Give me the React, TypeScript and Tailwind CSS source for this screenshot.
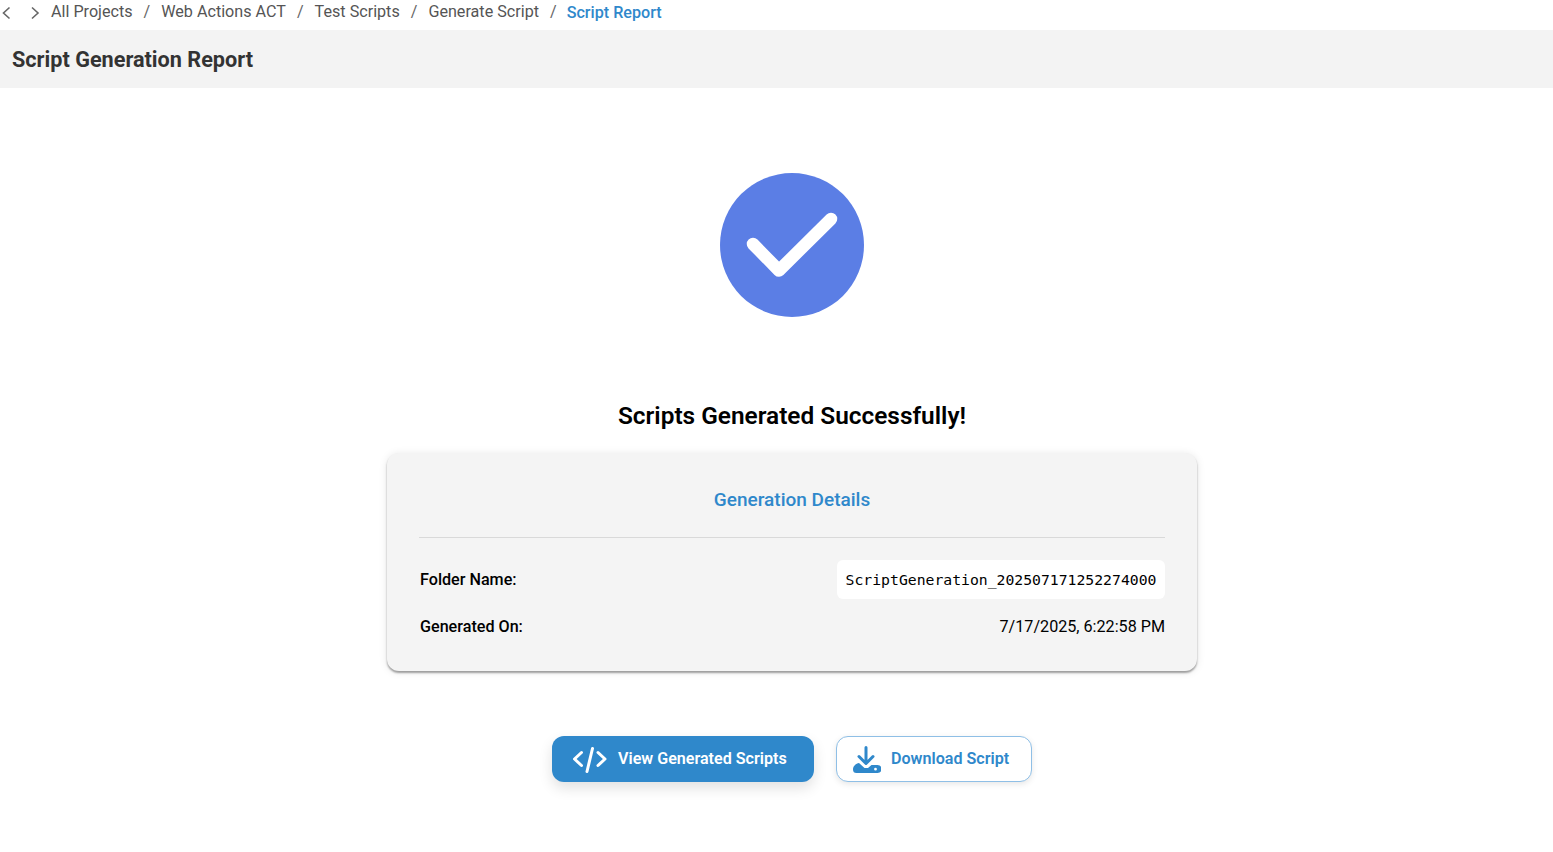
import React from "react";

const Sep = () => <span className="mx-[11px] text-[#666]">/</span>;

export default function App() {
  return (
    <div className="min-h-[852px] bg-white font-['Roboto',sans-serif] text-black overflow-hidden">
      <nav className="h-[30px] flex items-center text-[16.15px] text-[#555] leading-[24px] pb-[6px]">
        <svg width="10" height="14" viewBox="0 0 10 14" className="ml-[2px] mt-[1px]" fill="none" stroke="#666" strokeWidth="1.6">
          <path d="M7.500 1.500 1.500 7l6 5.500" />
        </svg>
        <svg width="10" height="14" viewBox="0 0 10 14" className="ml-[18px] mt-[1px]" fill="none" stroke="#666" strokeWidth="1.6">
          <path d="M2 1.500 8 7l-6 5.500" />
        </svg>
        <span className="ml-[11px]">All Projects</span>
        <Sep />
        <span>Web Actions ACT</span>
        <Sep />
        <span>Test Scripts</span>
        <Sep />
        <span>Generate Script</span>
        <Sep />
        <span className="font-medium text-[#2f88cb] mt-[2px] -ml-[1px]">Script Report</span>
      </nav>
      <header className="h-[58px] bg-[#f3f3f3] flex items-center pl-[12px]">
        <h1 className="text-[21.65px] font-bold text-[#333] leading-none mt-[2px]">Script Generation Report</h1>
      </header>
      <main className="pl-[31px] flex flex-col items-center">
        <div className="mt-[85px] w-[144px] h-[144px] rounded-full bg-[#5b7ee5] flex items-center justify-center">
          <svg width="144" height="144" viewBox="0 0 144 144" fill="none" stroke="white" strokeWidth="12.500" strokeLinecap="round" strokeLinejoin="round">
            <path d="M33 71 59 97.500 111 46" />
          </svg>
        </div>
        <h2 className="mt-[83px] text-[24.4px] leading-[32px] font-semibold text-black">Scripts Generated Successfully!</h2>
        <section className="mt-[21px] w-[810px] h-[218px] rounded-[12px] bg-[#f4f4f4] px-[32px] pt-[32px] shadow-[0_2px_2px_rgba(0,0,0,0.35),0_1px_8px_rgba(0,0,0,0.1)]">
          <h3 className="text-center text-[19px] leading-[30px] font-medium text-[#2f88cb] pb-[22px] border-b border-[#d9d9d9]">Generation Details</h3>
          <div className="mt-[22px] h-[39px] flex items-center justify-between text-[16.15px] pl-[1px]">
            <span className="font-medium pt-[2px]">Folder Name:</span>
            <span className="bg-white rounded-[6px] h-[39px] w-[328px] pt-[2px] flex items-center justify-center font-['DejaVu_Sans_Mono',monospace] text-[14.75px]">ScriptGeneration_202507171252274000</span>
          </div>
          <div className="mt-[8px] h-[40px] flex items-center justify-between text-[16.15px] pl-[1px]">
            <span className="font-medium">Generated On:</span>
            <span>7/17/2025, 6:22:58 PM</span>
          </div>
        </section>
        <div className="mt-[65px] flex gap-[22px]">
          <button className="w-[262px] h-[46px] rounded-[12px] bg-[#2f88cb] text-white text-[16.1px] font-semibold flex items-center pl-[20px] shadow-[0_6px_14px_rgba(0,0,0,0.12)]">
            <svg width="36" height="28" viewBox="0 0 36 28" fill="none" stroke="white" strokeWidth="3" strokeLinecap="round" strokeLinejoin="round" className="mr-[10px]">
              <path d="M9.500 7.500 2.500 14l7 6.500M26 7.500 33 14l-7 6.500M20.500 3.500 15 26.500" />
            </svg>
            View Generated Scripts
          </button>
          <button className="w-[196px] h-[46px] rounded-[12px] bg-white border border-[#8fbfe6] text-[#2f88cb] text-[16.1px] font-semibold flex items-center pl-[16px] shadow-[0_2px_6px_rgba(0,0,0,0.1)]">
            <svg width="28" height="27" viewBox="0 0 28 27" className="mr-[10px]">
              <path d="M13 1.500V17M6 10.500l7 7 7-7" fill="none" stroke="#2f88cb" strokeWidth="3" strokeLinecap="round" strokeLinejoin="round" />
              <path fillRule="evenodd" fill="#2f88cb" d="M0 23.500C0 20 3 17.500 6 17l5.500 5h3.500l3.500-3h6a3.750 3.750 0 0 1 0 8H3.500A3.500 3.500 0 0 1 0 23.500zM22.500 21.800a1.400 1.400 0 1 0 0 2.800 1.400 1.400 0 0 0 0-2.800z" />
            </svg>
            Download Script
          </button>
        </div>
      </main>
    </div>
  );
}
